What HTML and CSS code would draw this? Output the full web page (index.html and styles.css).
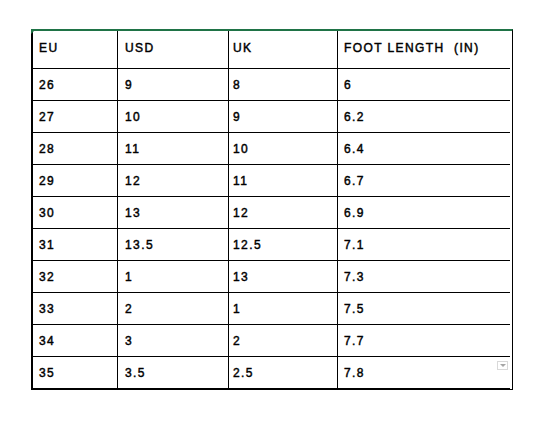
FILE: index.html
```html
<!DOCTYPE html>
<html>
<head>
<meta charset="utf-8">
<link rel="stylesheet" href="styles.css">
</head>
<body>
<div class="sheet">
  <div class="cell head c1">EU</div>
  <div class="cell head c2">USD</div>
  <div class="cell head c3">UK</div>
  <div class="cell head c4">FOOT LENGTH&nbsp;&nbsp;(IN)</div>

  <div class="cell c1">26</div><div class="cell c2">9</div><div class="cell c3">8</div><div class="cell c4">6</div>
  <div class="cell c1">27</div><div class="cell c2">10</div><div class="cell c3">9</div><div class="cell c4">6.2</div>
  <div class="cell c1">28</div><div class="cell c2">11</div><div class="cell c3">10</div><div class="cell c4">6.4</div>
  <div class="cell c1">29</div><div class="cell c2">12</div><div class="cell c3">11</div><div class="cell c4">6.7</div>
  <div class="cell c1">30</div><div class="cell c2">13</div><div class="cell c3">12</div><div class="cell c4">6.9</div>
  <div class="cell c1">31</div><div class="cell c2">13.5</div><div class="cell c3">12.5</div><div class="cell c4">7.1</div>
  <div class="cell c1">32</div><div class="cell c2">1</div><div class="cell c3">13</div><div class="cell c4">7.3</div>
  <div class="cell c1">33</div><div class="cell c2">2</div><div class="cell c3">1</div><div class="cell c4">7.5</div>
  <div class="cell c1">34</div><div class="cell c2">3</div><div class="cell c3">2</div><div class="cell c4">7.7</div>
  <div class="cell c1">35</div><div class="cell c2">3.5</div><div class="cell c3">2.5</div><div class="cell c4 last">7.8<span class="dropdown"><span class="tri"></span></span></div>
</div>
</body>
</html>
```

FILE: styles.css
```css
html, body {
  margin: 0;
  padding: 0;
  background: #ffffff;
}

body {
  font-family: "Liberation Sans", Arial, sans-serif;
  font-size: 12px;
  color: #000;
}

.sheet {
  position: relative;
  margin: 29px 0 0 31px;
  width: 479px;
  display: grid;
  grid-template-columns: 85px 111px 109px 172px;
  grid-auto-rows: 32px;
  grid-template-rows: 38px;
  border-top: 2px solid #1f7346;
  border-left: 2px solid #000;
  border-right: 1px solid #000;
  border-bottom: 1px solid #000;
}

.sheet::before {
  content: "";
  position: absolute;
  left: -2px;
  top: -2px;
  width: 0;
  height: 0;
  border-top: 5px solid #1f7346;
  border-right: 5px solid transparent;
}

.cell {
  display: flex;
  align-items: center;
  padding-left: 6px;
  border-right: 1px solid #000;
  border-bottom: 1px solid #000;
  letter-spacing: 1.4px;
  white-space: nowrap;
  -webkit-text-stroke: 0.45px #000;
}

.cell.c2 { padding-left: 7px; }
.cell.c3 { padding-left: 4px; }
.cell.c4 { padding-left: 6px; border-right: none; }

.head {
  padding-bottom: 3px;
}

.last {
  position: relative;
}

.dropdown {
  position: absolute;
  right: 2px;
  top: 4px;
  width: 11px;
  height: 9px;
  border: 1px solid #d9d9d9;
  background: #fff;
  display: flex;
  justify-content: center;
  padding-top: 2px;
  box-sizing: border-box;
  -webkit-text-stroke: 0;
}

.tri {
  width: 0;
  height: 0;
  border-left: 3px solid transparent;
  border-right: 3px solid transparent;
  border-top: 3px solid #a6a6a6;
}
```
